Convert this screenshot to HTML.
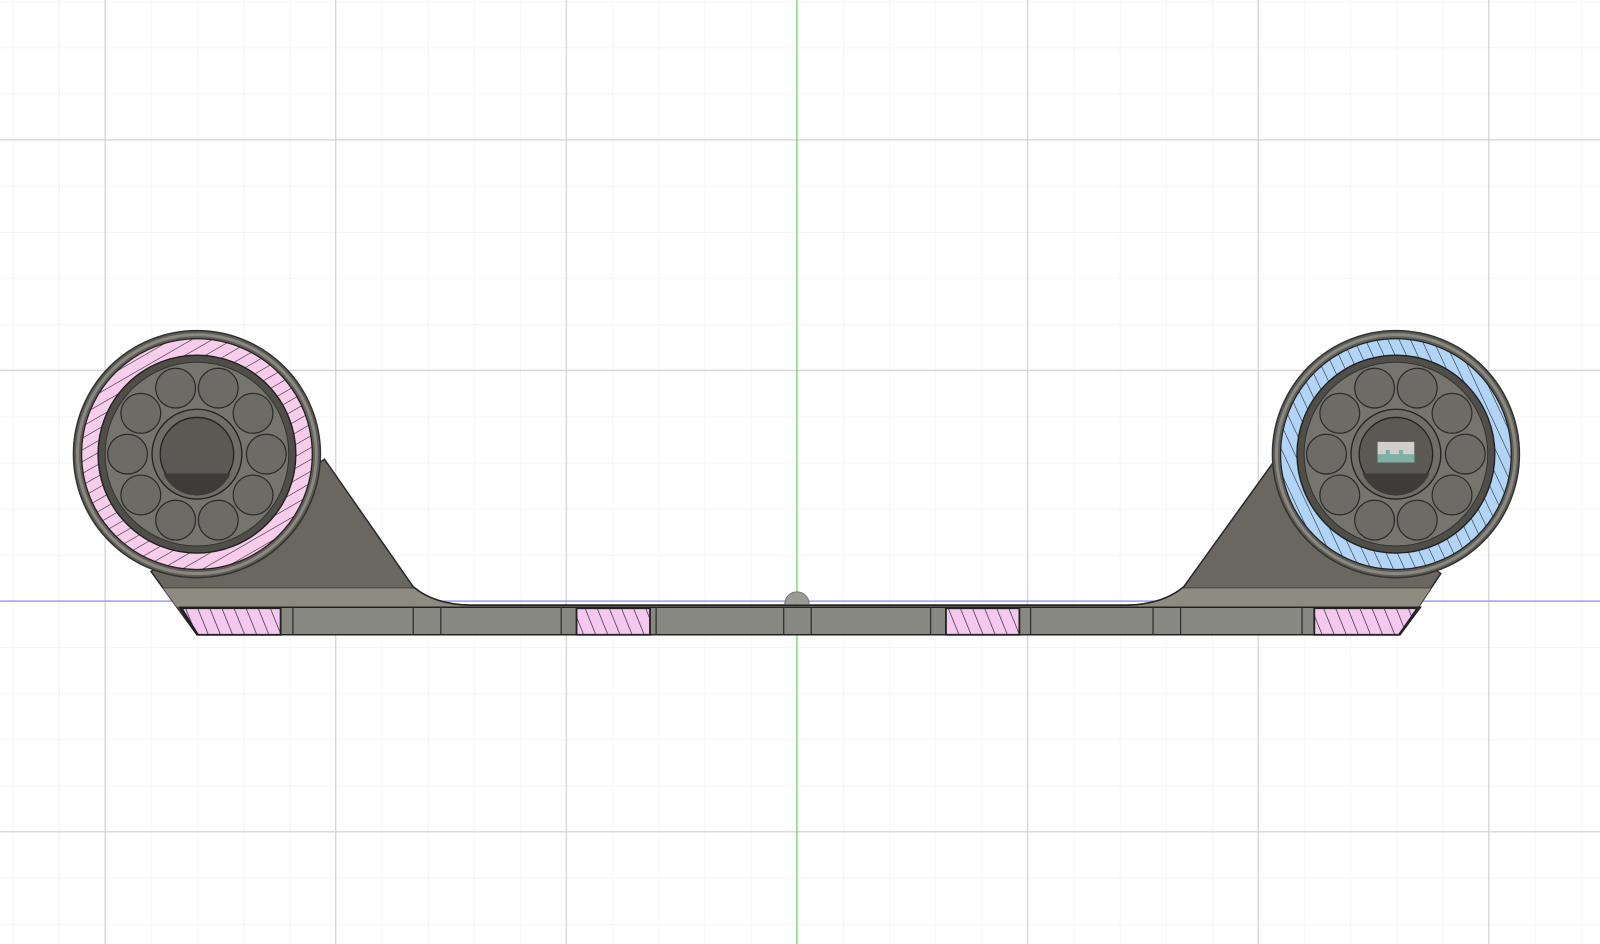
<!DOCTYPE html>
<html><head><meta charset="utf-8"><style>html,body{margin:0;padding:0;background:#fff;overflow:hidden}svg{display:block}</style></head>
<body>
<svg width="1600" height="944" viewBox="0 0 1568 925" preserveAspectRatio="none" xmlns="http://www.w3.org/2000/svg">
<defs>
<pattern id="gm" width="45.2" height="45.2" patternUnits="userSpaceOnUse" x="12.6" y="1.4">
<path d="M0 0V45.2M0 0H45.2" stroke="#efefef" stroke-width="1.3" fill="none"/>
</pattern>
<pattern id="hp" width="10" height="10" patternUnits="userSpaceOnUse" patternTransform="rotate(60)">
<rect width="10" height="10" fill="#f8cdec"/><path d="M0 0V10" stroke="#222" stroke-width="1.1"/>
</pattern>
<pattern id="hb" width="10" height="10" patternUnits="userSpaceOnUse" patternTransform="rotate(-25)">
<rect width="10" height="10" fill="#b2d5f7"/><path d="M0 0V10" stroke="#222" stroke-width="1.1"/>
</pattern>
<pattern id="hr" width="11" height="11" patternUnits="userSpaceOnUse" patternTransform="rotate(-22)">
<rect width="11" height="11" fill="#f5c8ef"/><path d="M0 0V11" stroke="#222" stroke-width="1.3"/>
</pattern>
<clipPath id="bc"><path d="M148 560 L318 450 L405 575 Q425 592 460 593 L1105 593 Q1140 592 1160 575 L1250 450 L1412 562 L1372 622 L193 622 Z"/></clipPath>
<g id="brg">
<circle r="121" fill="#5e5d57" stroke="#333" stroke-width="1.5"/>
<circle r="117" fill="none" stroke="#8a887f" stroke-width="3"/>
<circle r="113" fill="none" stroke="#333" stroke-width="1"/>
<circle r="97" fill="#4f4e49" stroke="#222" stroke-width="1.5"/>
<circle r="90" fill="#75746d" stroke="#333" stroke-width="1"/>
<g fill="#6c6b65" stroke="#2a2a2a" stroke-width="1.2">
<circle cx="20.9" cy="-64.7" r="19.5"/><circle cx="-20.9" cy="-64.7" r="19.5"/>
<circle cx="55" cy="-40" r="19.5"/><circle cx="-55" cy="-40" r="19.5"/>
<circle cx="68" cy="0" r="19.5"/><circle cx="-68" cy="0" r="19.5"/>
<circle cx="55" cy="40" r="19.5"/><circle cx="-55" cy="40" r="19.5"/>
<circle cx="20.9" cy="64.7" r="19.5"/><circle cx="-20.9" cy="64.7" r="19.5"/>
</g>
<circle r="44" fill="#6e6d66" stroke="#222" stroke-width="1.3"/>
<circle r="36" fill="#5a5954" stroke="#222" stroke-width="1.3"/>
<path d="M-33 19H33A36 36 0 0 1 -33 19Z" fill="#3d3c38"/>
</g>
</defs>
<rect width="1568" height="925" fill="#fff"/>
<rect width="1568" height="925" fill="url(#gm)"/>
<g stroke="#d6d6d6" stroke-width="1.3">
<path d="M103 0V925M329 0V925M555 0V925M1007 0V925M1233 0V925M1459 0V925M0 137H1568M0 363H1568M0 815H1568"/>
</g>
<path d="M781 0V925" stroke="#7de07d" stroke-width="1.5"/>
<path d="M0 589H1568" stroke="#9c9cf2" stroke-width="1.5"/>
<!-- body -->
<path d="M148 560 L318 450 L405 575 Q425 592 460 593 L1105 593 Q1140 592 1160 575 L1250 450 L1412 562 L1372 622 L193 622 Z" fill="#69675f" stroke="#2a2a2a" stroke-width="1.5"/>
<g clip-path="url(#bc)">
<rect x="140" y="576" width="1280" height="19" fill="#8f8b80"/>
<path d="M140 576H1420" stroke="#444" stroke-width="1"/>
</g>
<path d="M405 575 Q425 592 460 593 L1105 593 Q1140 592 1160 575" fill="none" stroke="#222" stroke-width="1.5"/>
<path d="M176 595 L1392 595 L1372 622 L193 622 Z" fill="#878882" stroke="#222" stroke-width="1.5"/>
<g stroke="#333" stroke-width="1.3">
<path d="M287 595V622M405 595V622M432 595V622M550 595V622M643 595V622M768 595V622M795 595V622M912 595V622M1010 595V622M1130 595V622M1157 595V622M1276 595V622"/>
</g>
<g fill="url(#hr)" stroke="#222" stroke-width="1.8">
<path d="M178 596H275V622H194Z"/>
<rect x="565" y="596" width="72" height="26"/>
<rect x="927" y="596" width="72" height="26"/>
<path d="M1288 596H1389L1371 622H1288Z"/>
</g>
<path d="M769 592A12 12 0 0 1 793 592" fill="#9a9a96" stroke="#777" stroke-width="1"/>
<!-- bearings -->
<g transform="translate(193,445)">
<use href="#brg"/>
<path fill-rule="evenodd" d="M0 -113A113 113 0 1 1 0 113A113 113 0 1 1 0 -113ZM0 -97A97 97 0 1 0 0 97A97 97 0 1 0 0 -97Z" fill="url(#hp)" stroke="#222" stroke-width="1.2"/>
</g>
<g transform="translate(1368,445)">
<use href="#brg"/>
<path fill-rule="evenodd" d="M0 -113A113 113 0 1 1 0 113A113 113 0 1 1 0 -113ZM0 -97A97 97 0 1 0 0 97A97 97 0 1 0 0 -97Z" fill="url(#hb)" stroke="#222" stroke-width="1.2"/>
<rect x="-18" y="-12" width="36" height="20" fill="#cfcfcc"/>
<path d="M-18 8V0H-10V-4H-6V0H3V-4H7V0H18V8Z" fill="#7fb0a4"/>
</g>
</svg>
</body></html>
